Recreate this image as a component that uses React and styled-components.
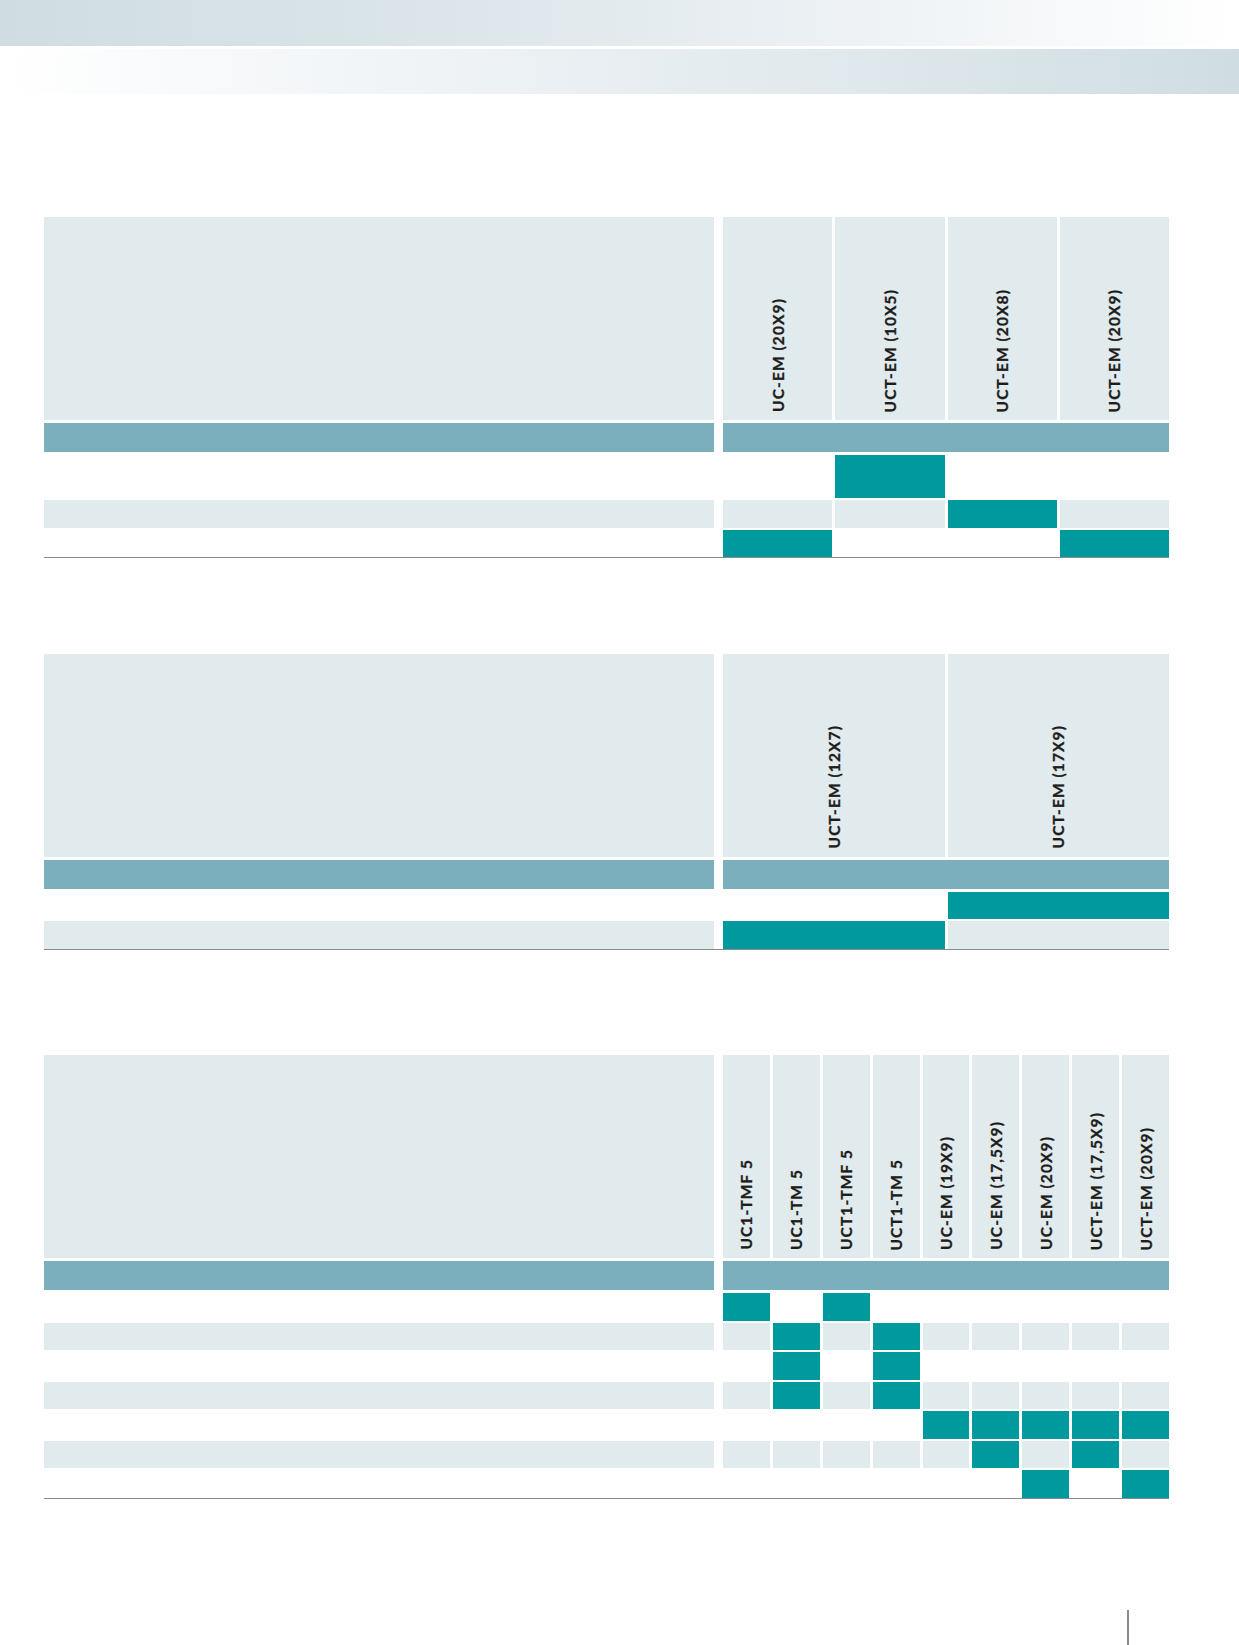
import React from "react";
import styled, { createGlobalStyle } from "styled-components";

const LIGHT = "#e1eaed";
const BAR = "#7bafbe";
const TEAL = "#00999d";

const GlobalStyle = createGlobalStyle`
  html, body {
    margin: 0;
    padding: 0;
    background: #ffffff;
  }
  body {
    font-family: "Lato", "Open Sans", sans-serif;
  }
`;

const Page = styled.div`
  width: 1239px;
  height: 1645px;
  overflow: hidden;
  display: flex;
  flex-direction: column;
  background: #ffffff;
`;

const BandTop = styled.div`
  height: 46px;
  background: linear-gradient(90deg, #cfdde3 0%, #dbe5ea 35%, #eef2f5 70%, #ffffff 100%);
`;

const BandBottom = styled.div`
  height: 45px;
  margin-top: 3px;
  background: linear-gradient(90deg, #ffffff 0%, #eff3f6 35%, #dfe8ec 70%, #cfdde3 100%);
`;

const Content = styled.div`
  display: flex;
  flex-direction: column;
  padding: 0 70px 0 44px;
`;

const Table = styled.div`
  display: flex;
  flex-direction: column;
  gap: 2px;
  margin-top: ${(p) => p.$top}px;
  border-bottom: 1px solid #8a8a8a;
`;

const Row = styled.div`
  display: grid;
  grid-template-columns: 670px 1fr;
  column-gap: 9px;
  height: ${(p) => p.$h}px;
`;

const BarRow = styled(Row)`
  margin: 1px 0;
`;

const Side = styled.div`
  background: ${(p) => (p.$shade ? LIGHT : "#ffffff")};
`;

const Bar = styled.div`
  background: ${BAR};
`;

const Cells = styled.div`
  display: grid;
  grid-template-columns: repeat(${(p) => p.$n}, 1fr);
  column-gap: 3px;
`;

const HeadCell = styled.div`
  background: ${LIGHT};
  display: flex;
  align-items: flex-end;
  justify-content: center;
  padding-bottom: 8px;
`;

const Label = styled.span`
  writing-mode: vertical-rl;
  transform: rotate(180deg);
  font-family: "Lato", "Open Sans", sans-serif;
  font-weight: 700;
  font-size: 15.5px;
  letter-spacing: 1.1px;
  color: #1d1d1b;
  -webkit-text-stroke: 0.3px #1d1d1b;
  white-space: nowrap;
`;

const Cell = styled.div`
  background: ${(p) => (p.$on ? TEAL : p.$shade ? LIGHT : "#ffffff")};
`;

const Footer = styled.div`
  margin-top: auto;
  height: 35px;
  display: flex;
  justify-content: flex-end;
  padding-right: 110px;
`;

const Rule = styled.div`
  width: 2px;
  background: #8a8a8a;
`;

const tables = [
  {
    top: 123,
    cols: ["UC-EM (20X9)", "UCT-EM (10X5)", "UCT-EM (20X8)", "UCT-EM (20X9)"],
    rows: [
      { h: 43, shade: false, on: [1] },
      { h: 27.5, shade: true, on: [2] },
      { h: 27.5, shade: false, on: [0, 3] },
    ],
  },
  {
    top: 95.5,
    cols: ["UCT-EM (12X7)", "UCT-EM (17X9)"],
    rows: [
      { h: 27.5, shade: false, on: [1] },
      { h: 27.5, shade: true, on: [0] },
    ],
  },
  {
    top: 105.5,
    cols: [
      "UC1-TMF 5",
      "UC1-TM 5",
      "UCT1-TMF 5",
      "UCT1-TM 5",
      "UC-EM (19X9)",
      "UC-EM (17,5X9)",
      "UC-EM (20X9)",
      "UCT-EM (17,5X9)",
      "UCT-EM (20X9)",
    ],
    rows: [
      { h: 27.5, shade: false, on: [0, 2] },
      { h: 27.5, shade: true, on: [1, 3] },
      { h: 27.5, shade: false, on: [1, 3] },
      { h: 27.5, shade: true, on: [1, 3] },
      { h: 27.5, shade: false, on: [4, 5, 6, 7, 8] },
      { h: 27.5, shade: true, on: [5, 7] },
      { h: 27.5, shade: false, on: [6, 8] },
    ],
  },
];

const MatrixTable = ({ top, cols, rows }) => (
  <Table $top={top}>
    <Row $h={203}>
      <Side $shade />
      <Cells $n={cols.length}>
        {cols.map((c) => (
          <HeadCell key={c}>
            <Label>{c}</Label>
          </HeadCell>
        ))}
      </Cells>
    </Row>
    <BarRow $h={29}>
      <Bar />
      <Bar />
    </BarRow>
    {rows.map((r, i) => (
      <Row key={i} $h={r.h}>
        <Side $shade={r.shade} />
        <Cells $n={cols.length}>
          {cols.map((c, j) => (
            <Cell key={c} $shade={r.shade} $on={r.on.includes(j)} />
          ))}
        </Cells>
      </Row>
    ))}
  </Table>
);

export default function App() {
  return (
    <>
      <GlobalStyle />
      <Page>
        <BandTop />
        <BandBottom />
        <Content>
          {tables.map((t, i) => (
            <MatrixTable key={i} {...t} />
          ))}
        </Content>
        <Footer>
          <Rule />
        </Footer>
      </Page>
    </>
  );
}
